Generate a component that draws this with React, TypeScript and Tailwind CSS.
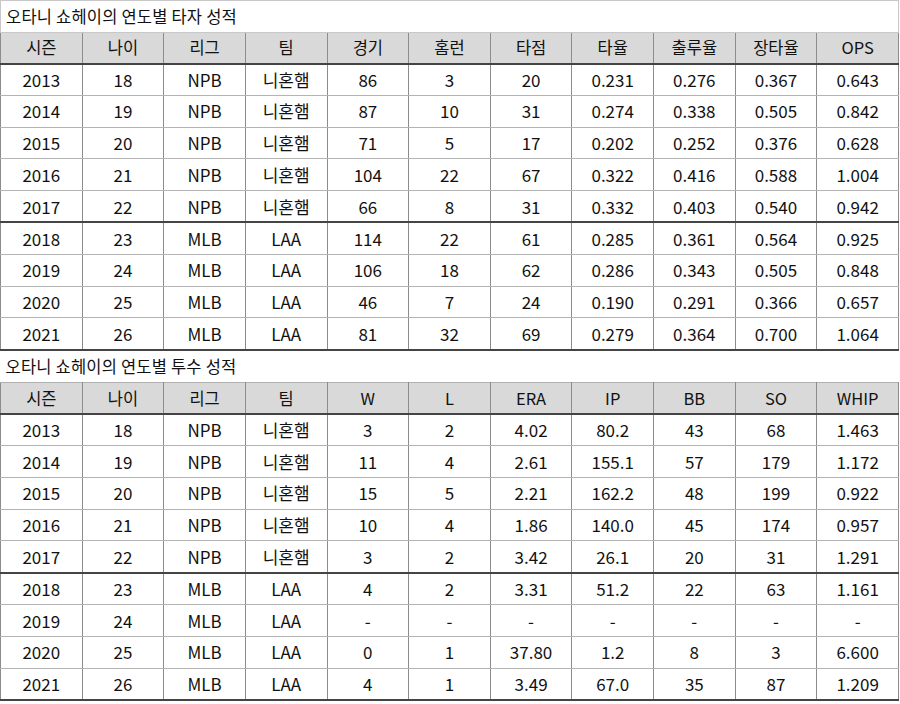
const batting = {
  title: "오타니 쇼헤이의 연도별 타자 성적",
  headers: ["시즌", "나이", "리그", "팀", "경기", "홈런", "타점", "타율", "출루율", "장타율", "OPS"],
  rows: [
    ["2013", "18", "NPB", "니혼햄", "86", "3", "20", "0.231", "0.276", "0.367", "0.643"],
    ["2014", "19", "NPB", "니혼햄", "87", "10", "31", "0.274", "0.338", "0.505", "0.842"],
    ["2015", "20", "NPB", "니혼햄", "71", "5", "17", "0.202", "0.252", "0.376", "0.628"],
    ["2016", "21", "NPB", "니혼햄", "104", "22", "67", "0.322", "0.416", "0.588", "1.004"],
    ["2017", "22", "NPB", "니혼햄", "66", "8", "31", "0.332", "0.403", "0.540", "0.942"],
    ["2018", "23", "MLB", "LAA", "114", "22", "61", "0.285", "0.361", "0.564", "0.925"],
    ["2019", "24", "MLB", "LAA", "106", "18", "62", "0.286", "0.343", "0.505", "0.848"],
    ["2020", "25", "MLB", "LAA", "46", "7", "24", "0.190", "0.291", "0.366", "0.657"],
    ["2021", "26", "MLB", "LAA", "81", "32", "69", "0.279", "0.364", "0.700", "1.064"],
  ],
};

const pitching = {
  title: "오타니 쇼헤이의 연도별 투수 성적",
  headers: ["시즌", "나이", "리그", "팀", "W", "L", "ERA", "IP", "BB", "SO", "WHIP"],
  rows: [
    ["2013", "18", "NPB", "니혼햄", "3", "2", "4.02", "80.2", "43", "68", "1.463"],
    ["2014", "19", "NPB", "니혼햄", "11", "4", "2.61", "155.1", "57", "179", "1.172"],
    ["2015", "20", "NPB", "니혼햄", "15", "5", "2.21", "162.2", "48", "199", "0.922"],
    ["2016", "21", "NPB", "니혼햄", "10", "4", "1.86", "140.0", "45", "174", "0.957"],
    ["2017", "22", "NPB", "니혼햄", "3", "2", "3.42", "26.1", "20", "31", "1.291"],
    ["2018", "23", "MLB", "LAA", "4", "2", "3.31", "51.2", "22", "63", "1.161"],
    ["2019", "24", "MLB", "LAA", "-", "-", "-", "-", "-", "-", "-"],
    ["2020", "25", "MLB", "LAA", "0", "1", "37.80", "1.2", "8", "3", "6.600"],
    ["2021", "26", "MLB", "LAA", "4", "1", "3.49", "67.0", "35", "87", "1.209"],
  ],
};

type Stats = { title: string; headers: string[]; rows: string[][] };

function StatTable({ data, boxed }: { data: Stats; boxed?: boolean }) {
  return (
    <table className="w-[899px] table-fixed border-collapse">
      <thead>
        <tr className="h-[32px]">
          <th
            colSpan={11}
            className={`pl-[5px] text-left text-[16.5px] font-normal tracking-[0.2px] ${
              boxed ? "border border-[#c8c8c8]" : ""
            }`}
          >
            {data.title}
          </th>
        </tr>
        <tr className="h-[31px] bg-[#d9d9d9]">
          {data.headers.map((h) => (
            <th
              key={h}
              className="border-t border-t-[#b0b0b0] border-b-2 border-b-[#444] border-x border-x-[#8c8c8c] text-[16.5px] font-normal"
            >
              {h}
            </th>
          ))}
        </tr>
      </thead>
      <tbody>
        {data.rows.map((row, i) => (
          <tr key={row[0]} className="h-[31.8px]">
            {row.map((cell, j) => (
              <td
                key={j}
                className={`border-x border-x-[#8c8c8c] text-center text-[17px] ${
                  i === 4 || i === data.rows.length - 1
                    ? "border-b-2 border-b-[#444]"
                    : "border-b border-b-[#b4b4b4]"
                }`}
              >
                {cell}
              </td>
            ))}
          </tr>
        ))}
      </tbody>
    </table>
  );
}

export default function App() {
  return (
    <div
      className="h-[704px] w-[900px] overflow-hidden bg-white text-[#111]"
      style={{ fontFamily: '"Noto Sans CJK KR", "Noto Sans", sans-serif' }}
    >
      <StatTable data={batting} boxed />
      <StatTable data={pitching} />
    </div>
  );
}
